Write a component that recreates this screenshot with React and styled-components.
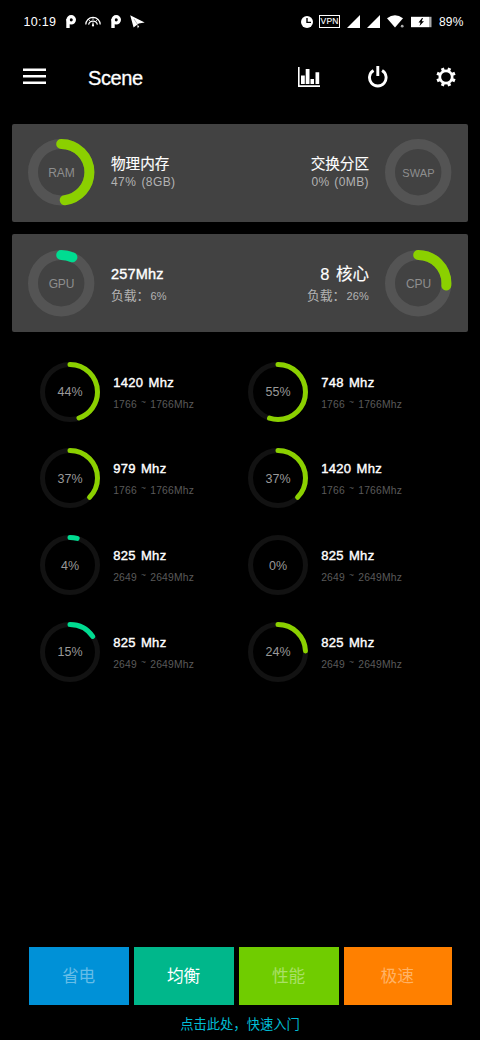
import React from "react";
import styled, { createGlobalStyle } from "styled-components";

const Global = createGlobalStyle`
  * { box-sizing: border-box; }
  body { margin: 0; background: #000; }
`;

const Screen = styled.main`
  width: 480px;
  height: 1040px;
  background: #000;
  color: #fff;
  overflow: hidden;
  display: flex;
  flex-direction: column;
  font-family: "Liberation Sans", "Noto Sans CJK SC", sans-serif;
`;

const Text = styled.span`
  display: block;
  white-space: pre;
  font-size: ${(p) => p.$size}px;
  line-height: ${(p) => p.$line || 20}px;
  letter-spacing: ${(p) => p.$track || 0}px;
  word-spacing: ${(p) => p.$word || 0}px;
  color: ${(p) => p.$color || "#fff"};
  -webkit-text-stroke: ${(p) => p.$stroke || 0}px currentColor;
`;

const StatusBar = styled.header`
  height: 43px;
  padding: 0 16.6px 0 23.5px;
  display: flex;
  align-items: center;
  justify-content: space-between;
`;

const StatusGroup = styled.div`
  display: flex;
  align-items: center;
  gap: ${(p) => p.$gap}px;
  svg { display: block; }
`;

const VpnBadge = styled.span`
  width: 21px;
  height: 13px;
  border: 1px solid #fff;
  display: grid;
  place-items: center;
  font-size: 8.5px;
  line-height: 11px;
  letter-spacing: 0.2px;
  -webkit-text-stroke: 0.1px #fff;
`;

const AppBar = styled.nav`
  height: 80.7px;
  padding: 0 24px 13px 22px;
  display: flex;
  align-items: center;
  svg { display: block; }
`;

const Title = styled.h1`
  flex: 1;
  margin: 2px 0 0 42px;
  font-size: 20px;
  line-height: 26px;
  font-weight: 400;
  letter-spacing: -0.4px;
  -webkit-text-stroke: 0.3px #fff;
`;

const Actions = styled.div`
  display: flex;
  align-items: center;
  gap: 47.5px;
`;

const Panels = styled.section`
  display: flex;
  flex-direction: column;
  gap: 12.7px;
  padding: 0 12.3px;
`;

const Panel = styled.div`
  height: 98px;
  border-radius: 2px;
  background: #424242;
  padding: 0 16px;
  display: flex;
  justify-content: space-between;
  align-items: center;
`;

const Metric = styled.div`
  display: flex;
  flex-direction: ${(p) => (p.$end ? "row-reverse" : "row")};
  align-items: center;
  gap: 16.3px;
`;

const Lines = styled.div`
  display: flex;
  flex-direction: column;
  align-items: ${(p) => (p.$end ? "flex-end" : "flex-start")};
  padding-top: ${(p) => p.$drop || 0}px;
`;

const Load = styled.div`
  display: flex;
  align-items: baseline;
  gap: 1px;
`;

const Tilde = styled.span`
  display: inline-block;
  font-size: 8.5px;
  line-height: 8px;
  vertical-align: 3px;
`;

const Gauge = styled.div`
  display: grid;
  place-items: center;
  flex: none;
  > * { grid-area: 1 / 1; }
  > span { padding-top: 1px; }
  svg { display: block; }
`;

const Cores = styled.section`
  display: grid;
  grid-template-columns: 208px 208px;
  grid-auto-rows: 86.7px;
  padding: 16px 0 0 40.2px;
`;

const Core = styled.div`
  display: flex;
  align-items: center;
  gap: 13px;
`;

const Footer = styled.footer`
  margin-top: auto;
  display: flex;
  flex-direction: column;
  align-items: center;
  padding-bottom: 5px;
  gap: 9.8px;
`;

const Modes = styled.div`
  width: 422.3px;
  margin-left: 1px;
  display: grid;
  grid-template-columns: 100px 100px 100px 107.3px;
  gap: 5px;
`;

const Mode = styled.button`
  height: 58.5px;
  border: 0;
  padding: 2px 1.5px 0 0;
  display: grid;
  place-items: center;
  font-family: inherit;
  background: ${(p) => p.$bg};
`;

function Ring({ size, width, value, track, label, labelSize, labelColor, labelTrack }) {
  const r = (size - width) / 2;
  const c = size / 2;
  const color = value < 20 ? "#00dc91" : "#8bd000";
  return (
    <Gauge>
      <svg width={size} height={size} fill="none" strokeWidth={width}>
        <circle cx={c} cy={c} r={r} stroke={track} />
        {value > 0 && (
          <circle
            cx={c} cy={c} r={r} stroke={color} strokeLinecap="round"
            pathLength="100" strokeDasharray={`${value} 200`}
            transform={`rotate(-90 ${c} ${c})`}
          />
        )}
      </svg>
      <Text $size={labelSize} $color={labelColor} $track={labelTrack}>{label}</Text>
    </Gauge>
  );
}

const PanelRing = (p) => (
  <Ring size={66.4} width={10} track="#545454" labelSize={12} labelTrack={-0.1} labelColor="#8e8e8e" {...p} />
);

const LoadLine = ({ value }) => (
  <Load>
    <Text $size={12.8} $color="#b3b3b3" $line={22}>负载：</Text>
    <Text $size={11} $track={0.2} $color="#b3b3b3" $line={22}>{value}</Text>
  </Load>
);

const cores = [
  [44, 44.7, "1420 Mhz", 1766],
  [55, 55, "748 Mhz", 1766],
  [37, 37.4, "979 Mhz", 1766],
  [37, 37.4, "1420 Mhz", 1766],
  [4, 4.2, "825 Mhz", 2649],
  [0, 0, "825 Mhz", 2649],
  [15, 15.4, "825 Mhz", 2649],
  [24, 24.4, "825 Mhz", 2649],
];

const modes = [
  ["省电", "#0091d7", "#66bde7"],
  ["均衡", "#00b78b", "#fff"],
  ["性能", "#70cc00", "#a9e066"],
  ["极速", "#ff8000", "#ffb366"],
];

const Parking = () => (
  <svg width="10" height="13" viewBox="0 0 10 13">
    <circle cx="5.2" cy="4.8" r="3.2" fill="none" stroke="#fff" strokeWidth="3.2" />
    <path d="M.3 4h3.4v9H.3Z" fill="#fff" />
  </svg>
);

const Dial = () => (
  <svg width="16" height="11" viewBox="0 0 16 11" fill="none" stroke="#fff" strokeWidth="1.2">
    <path d="M.8 8.6a7.2 7.2 0 0 1 14.4 0M3.6 8.6a4.5 4.5 0 0 1 8.8 0" />
    <path d="M8 1v3M3.2 3.2l1.9 2M12.8 3.2l-1.9 2" strokeWidth="0.8" />
    <path d="m8 5.2 1.1 4.2a1.1 1.1 0 1 1-2.2 0Z" fill="#fff" stroke="none" />
  </svg>
);

const Plane = () => (
  <svg width="15" height="14" viewBox="0 0 15 14" fill="#fff">
    <path d="M.2.2 14.7 7.4 8.8 8.6 3.6 12.6ZM7.2 10.2l2 .9-1.4 2.4Z" />
    <path d="M4 4 7.4 9.2" stroke="#000" strokeWidth=".3" />
  </svg>
);

const Signal = () => (
  <svg width="13" height="13" viewBox="0 0 13 13"><path d="M13 0v13H0Z" fill="#fff" /></svg>
);

const gearTeeth = [0, 45, 90, 135, 180, 225, 270, 315];

export default function App() {
  return (
    <Screen>
      <Global />
      <StatusBar>
        <StatusGroup $gap={9.5}>
          <Text $size={12.5} $track={0.3}>10:19</Text>
          <Parking />
          <Dial />
          <Parking />
          <Plane />
        </StatusGroup>
        <StatusGroup $gap={7}>
          <StatusGroup $gap={6}>
            <svg width="12" height="12" viewBox="0 0 12 12">
              <circle cx="6" cy="6" r="6" fill="#fff" />
              <path d="M6 2v4.4h4" fill="none" stroke="#000" strokeWidth="1.4" />
            </svg>
            <VpnBadge>VPN</VpnBadge>
          </StatusGroup>
          <Signal />
          <Signal />
          <svg width="17" height="13" viewBox="0 0 17 13">
            <path d="M0 3.2Q8-2.6 16 3.2L8 12.5Z" fill="#fff" />
            <circle cx="15" cy="11.2" r="2.3" fill="#000" />
            <circle cx="15.2" cy="11.2" r="1.4" fill="#aaa" />
          </svg>
          <svg width="21" height="12" viewBox="0 0 21 12">
            <path d="M0 .8h18v10.4H0Z" fill="#fff" />
            <path d="M18 .8h2.5v10.4H18Z" fill="#aaa" />
            <path d="m11 2-3.5 4.5h2L8.5 10 13 5.3h-2.3L12 2Z" fill="#000" />
          </svg>
          <Text $size={12} $track={0.1}>89%</Text>
        </StatusGroup>
      </StatusBar>

      <AppBar>
        <svg width="24" height="17" viewBox="0 0 24 17" fill="#fff">
          <path d="M1 .5h23v2.5H1ZM1 7h23v2.5H1ZM1 13.5h23V16H1Z" />
        </svg>
        <Title>Scene</Title>
        <Actions>
          <svg width="22" height="20" viewBox="0 0 22 20" fill="#fff">
            <path d="M0 0h1.6v18.2H22V20H0ZM3 8.5h3.8V17H3ZM7.7 2h3.8v15H7.7ZM12.5 12h3.5v5h-3.5ZM17.5 5.3h3.7V17h-3.7Z" />
          </svg>
          <svg width="21" height="22" viewBox="0.7 0 21 22" fill="none" stroke="#fff" strokeWidth="2.9">
            <path d="M6.2 4.6a8.3 8.3 0 1 0 8.6 0M10.5 0v10" />
          </svg>
          <svg width="20" height="20" viewBox="0 0 20 20" fill="none" stroke="#fff">
            <circle cx="10" cy="10" r="6.2" strokeWidth="2.7" />
            {gearTeeth.map((a) => (
              <path key={a} d="M10 3.5V.3" strokeWidth="3.2" transform={`rotate(${a + 22.5} 10 10)`} />
            ))}
          </svg>
        </Actions>
      </AppBar>

      <Panels>
        <Panel>
          <Metric>
            <PanelRing value={48} label="RAM" />
            <Lines>
              <Text $size={14.6} $stroke={0.15}>物理内存</Text>
              <Text $size={12} $track={0.4} $word={1.5} $color="#b3b3b3" $line={17}>47% (8GB)</Text>
            </Lines>
          </Metric>
          <Metric $end>
            <PanelRing value={0} label="SWAP" labelSize={11} labelTrack={0.1} />
            <Lines $end>
              <Text $size={14.6} $stroke={0.15}>交换分区</Text>
              <Text $size={12} $track={0.4} $word={1} $color="#b3b3b3" $line={17}>0% (0MB)</Text>
            </Lines>
          </Metric>
        </Panel>
        <Panel>
          <Metric>
            <PanelRing value={6.5} label="GPU" />
            <Lines $drop={4}>
              <Text $size={14.5} $stroke={0.4} $track={0.2} $line={22}>257Mhz</Text>
              <LoadLine value="6%" />
            </Lines>
          </Metric>
          <Metric $end>
            <PanelRing value={26.3} label="CPU" />
            <Lines $end $drop={4}>
              <Text $size={16.5} $stroke={0.15} $word={2} $line={22}>8 核心</Text>
              <LoadLine value="26%" />
            </Lines>
          </Metric>
        </Panel>
      </Panels>

      <Cores>
        {cores.map(([load, arc, freq, limit], i) => (
          <Core key={i}>
            <Ring size={60} width={5} value={arc} track="#121212" label={`${load}%`} labelSize={12.5} labelTrack={0.1} labelColor="#999" />
            <Lines $drop={4}>
              <Text $size={13} $stroke={0.4} $track={0.3} $word={1.3} $line={22}>{freq}</Text>
              <Text $size={10.3} $track={0.2} $word={1} $color="#5a5a5a" $line={22}>
                {limit} <Tilde>~</Tilde> {limit}Mhz
              </Text>
            </Lines>
          </Core>
        ))}
      </Cores>

      <Footer>
        <Modes>
          {modes.map(([name, bg, color]) => (
            <Mode key={name} $bg={bg}><Text $size={16.7} $color={color}>{name}</Text></Mode>
          ))}
        </Modes>
        <Text $size={13.3} $color="#00bcd4">点击此处，快速入门</Text>
      </Footer>
    </Screen>
  );
}
